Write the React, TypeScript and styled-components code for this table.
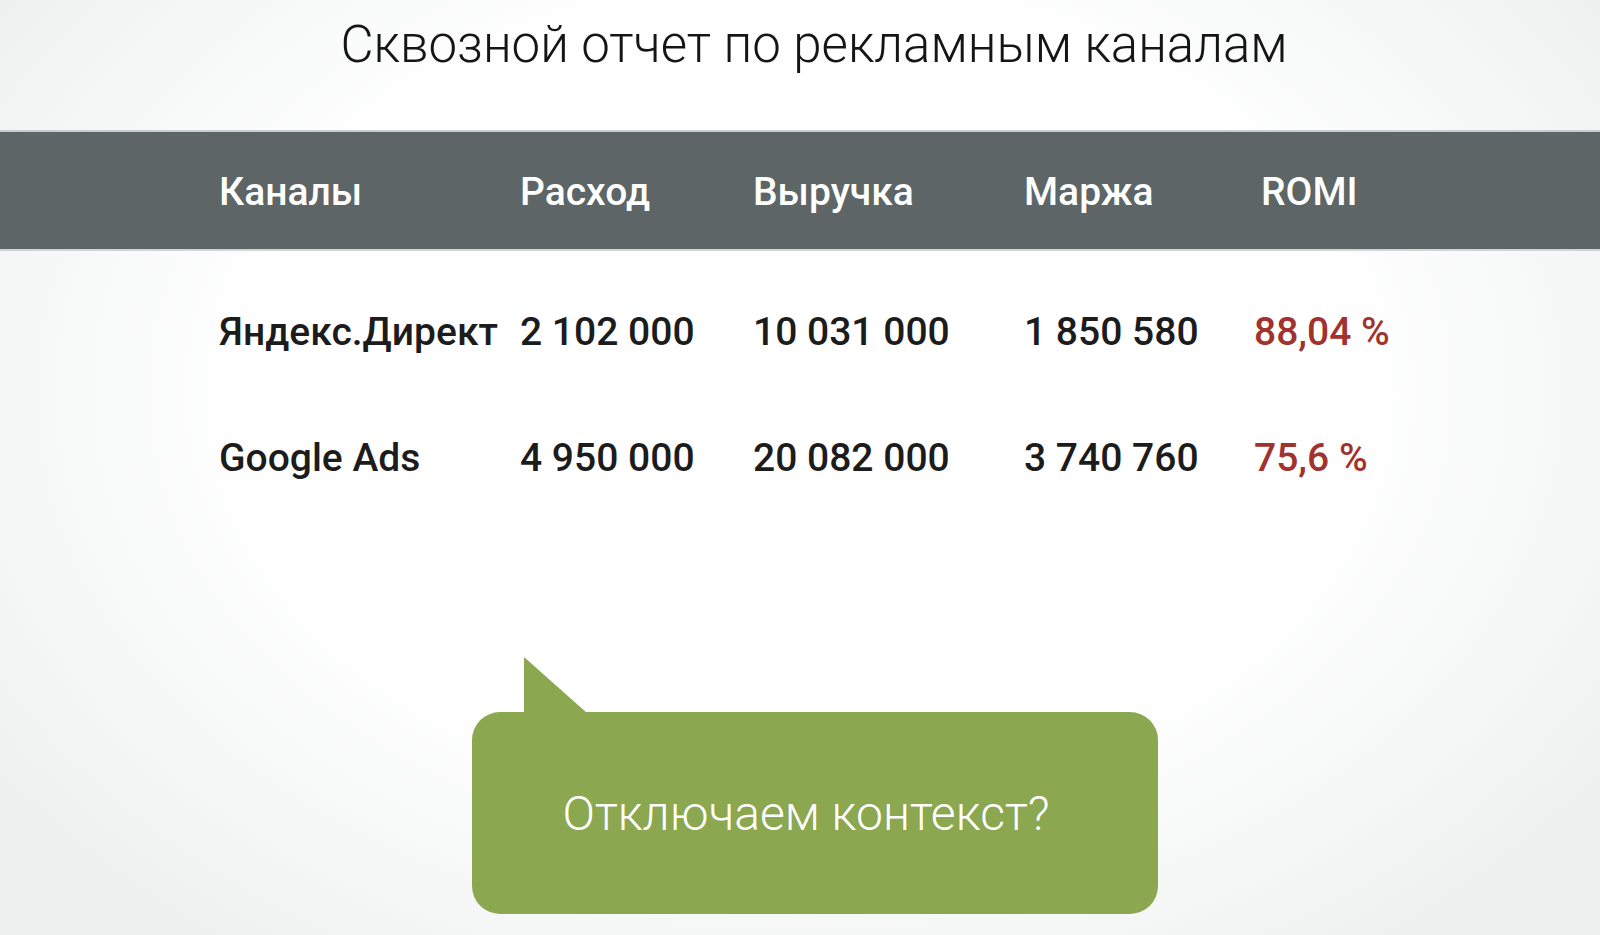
import React from 'react';
import styled, { createGlobalStyle } from 'styled-components';

const GlobalStyle = createGlobalStyle`
  html, body {
    margin: 0;
    padding: 0;
  }
  body {
    font-family: Roboto, 'Noto Sans', sans-serif;
  }
`;

interface ChannelRow {
  name: string;
  spend: string;
  revenue: string;
  margin: string;
  romi: string;
}

const rows: ChannelRow[] = [
  {
    name: 'Яндекс.Директ',
    spend: '2 102 000',
    revenue: '10 031 000',
    margin: '1 850 580',
    romi: '88,04 %',
  },
  {
    name: 'Google Ads',
    spend: '4 950 000',
    revenue: '20 082 000',
    margin: '3 740 760',
    romi: '75,6 %',
  },
];

const Slide = styled.div`
  width: 1600px;
  height: 935px;
  overflow: hidden;
  display: flex;
  flex-direction: column;
  background: radial-gradient(
    ellipse 62% 75% at 50% 42%,
    #ffffff 55%,
    #eef0f0 100%
  );
`;

const Title = styled.h1`
  margin: 0;
  height: 130px;
  padding-top: 13px;
  padding-left: 28px;
  box-sizing: border-box;
  text-align: center;
  font-family: Roboto, sans-serif;
  font-weight: 300;
  font-size: 51px;
  line-height: 64px;
  color: #151515;
`;

const Grid = styled.div`
  display: grid;
  grid-template-columns: 301px 233px 271px 237px 1fr;
  padding-left: 219px;
`;

const HeaderBar = styled(Grid)`
  height: 121px;
  align-items: center;
  background: #5d6566;
  border-top: 2px solid #c9cdcd;
  border-bottom: 2px solid #d2d5d5;
  box-sizing: border-box;
`;

const HeadCell = styled.div`
  font-family: Roboto, sans-serif;
  font-weight: 500;
  font-size: 39px;
  color: #ffffff;
  padding-top: 2px;
`;

const Body = styled.div`
  padding-top: 18px;
`;

const DataRow = styled(Grid)`
  height: 126px;
  align-items: center;
`;

const Cell = styled.div<{ $accent?: boolean }>`
  font-family: Roboto, sans-serif;
  font-weight: 500;
  font-size: 39px;
  color: ${(p) => (p.$accent ? '#a1332e' : '#1c1c1c')};
  margin-left: ${(p) => (p.$accent ? '-7px' : '0')};
  white-space: nowrap;
`;

const BubbleArea = styled.div`
  flex: 1;
  display: flex;
  justify-content: center;
  padding-top: 191px;
  padding-left: 30px;
`;

const Bubble = styled.div`
  position: relative;
  width: 686px;
  height: 202px;
  border-radius: 28px;
  background: #8ba74f;
  display: flex;
  align-items: center;
  justify-content: center;
  padding-right: 18px;
  box-sizing: border-box;

  &::before {
    content: '';
    position: absolute;
    left: 52px;
    top: -55px;
    width: 63px;
    height: 56px;
    background: #8ba74f;
    clip-path: polygon(0 0, 100% 100%, 0 100%);
  }
`;

const BubbleText = styled.span`
  font-family: Roboto, sans-serif;
  font-weight: 300;
  font-size: 48px;
  color: #ffffff;
`;

const App: React.FC = () => {
  return (
    <>
      <GlobalStyle />
      <Slide>
        <Title>Сквозной отчет по рекламным каналам</Title>
        <HeaderBar>
          <HeadCell>Каналы</HeadCell>
          <HeadCell>Расход</HeadCell>
          <HeadCell>Выручка</HeadCell>
          <HeadCell>Маржа</HeadCell>
          <HeadCell>ROMI</HeadCell>
        </HeaderBar>
        <Body>
          {rows.map((row) => (
            <DataRow key={row.name}>
              <Cell>{row.name}</Cell>
              <Cell>{row.spend}</Cell>
              <Cell>{row.revenue}</Cell>
              <Cell>{row.margin}</Cell>
              <Cell $accent>{row.romi}</Cell>
            </DataRow>
          ))}
        </Body>
        <BubbleArea>
          <Bubble>
            <BubbleText>Отключаем контекст?</BubbleText>
          </Bubble>
        </BubbleArea>
      </Slide>
    </>
  );
};

export default App;
